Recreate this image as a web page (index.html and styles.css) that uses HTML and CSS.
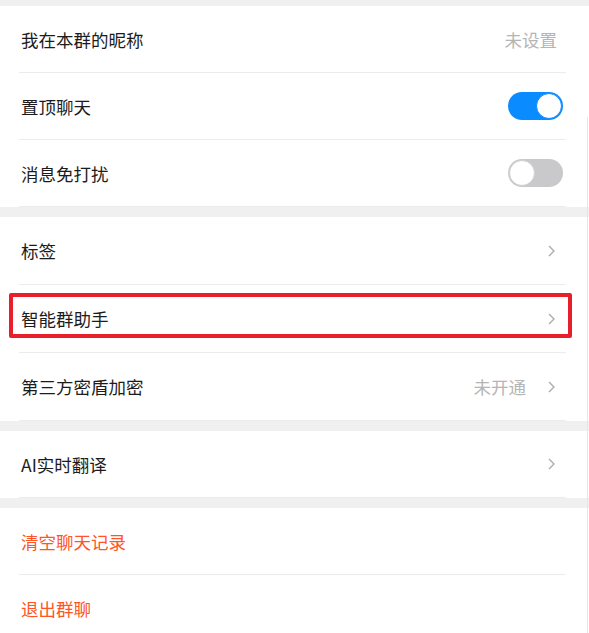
FILE: index.html
```html
<!DOCTYPE html>
<html lang="zh-CN">
<head>
    <meta charset="UTF-8">
    <meta name="viewport" content="width=device-width, initial-scale=1.0">
    <title>聊天信息</title>
    <link rel="stylesheet" href="styles.css">
</head>
<body>
    <div class="page">
        <div class="group">
            <div class="row">
                <span class="label">我在本群的昵称</span>
                <span class="value value-plain">未设置</span>
            </div>
            <div class="row">
                <span class="label">置顶聊天</span>
                <span class="switch on"><span class="knob"></span></span>
            </div>
            <div class="row">
                <span class="label">消息免打扰</span>
                <span class="switch"><span class="knob"></span></span>
            </div>
        </div>

        <div class="group group-tall">
            <div class="row">
                <span class="label">标签</span>
                <svg class="arrow" viewBox="0 0 7 12"><path d="M1 1 L6 6 L1 11"/></svg>
            </div>
            <div class="row row-marked">
                <span class="label">智能群助手</span>
                <svg class="arrow" viewBox="0 0 7 12"><path d="M1 1 L6 6 L1 11"/></svg>
                <span class="highlight"></span>
            </div>
            <div class="row">
                <span class="label">第三方密盾加密</span>
                <span class="value">未开通</span>
                <svg class="arrow" viewBox="0 0 7 12"><path d="M1 1 L6 6 L1 11"/></svg>
            </div>
        </div>

        <div class="group">
            <div class="row">
                <span class="label">AI实时翻译</span>
                <svg class="arrow" viewBox="0 0 7 12"><path d="M1 1 L6 6 L1 11"/></svg>
            </div>
        </div>

        <div class="group">
            <div class="row">
                <span class="label danger">清空聊天记录</span>
            </div>
            <div class="row">
                <span class="label danger">退出群聊</span>
            </div>
        </div>
        <span class="edge"></span>
    </div>
</body>
</html>
```

FILE: styles.css
```css
body {
    margin: 0;
    padding: 0;
    background: #f0f0f0;
    font-family: "Noto Sans CJK SC", "Noto Sans", sans-serif;
    color: #1c1c1c;
}

.page {
    position: relative;
    padding-top: 6px;
    height: 633px;
    overflow: hidden;
}

.group {
    background: #fff;
    margin-bottom: 10px;
}

.row {
    position: relative;
    display: flex;
    align-items: center;
    height: 66px;
    margin: 0 23px 0 19px;
    padding: 0 3px 0 2px;
    border-bottom: 1px solid #ececec;
    font-size: 17.5px;
}

.group-tall .row {
    height: 67px;
}

.label {
    flex: 1;
}

.danger {
    color: #ff5526;
}

.value {
    color: #b5b5b5;
    margin-right: 22px;
}

.value-plain {
    margin-right: 6px;
}

.arrow {
    width: 7px;
    height: 12px;
    margin-right: 8px;
    fill: none;
    stroke: #ababab;
    stroke-width: 1.4;
}

.switch {
    position: relative;
    width: 55px;
    height: 28px;
    border-radius: 14px;
    background: #c9c9cb;
}

.switch .knob {
    position: absolute;
    top: 1px;
    left: 1px;
    width: 24px;
    height: 24px;
    border-radius: 50%;
    background: #fff;
    border: 1px solid #d0d0d0;
}

.switch.on {
    background: #0a8bff;
}

.switch.on .knob {
    left: 28px;
    border-color: #0a8bff;
}

/* red annotation box over the assistant row */
.highlight {
    position: absolute;
    top: 8px;
    bottom: 14px;
    left: -10px;
    right: -6px;
    border: 4px solid #e81e2a;
    border-radius: 2px;
}

.edge {
    position: absolute;
    top: 117px;
    bottom: 0;
    right: 1px;
    width: 1px;
    background: #e6e6e6;
}
```
